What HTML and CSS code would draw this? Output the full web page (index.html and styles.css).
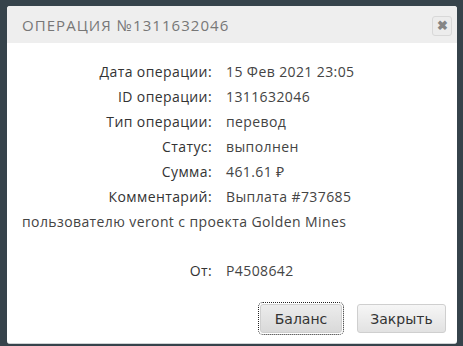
FILE: index.html
```html
<!DOCTYPE html>
<html lang="ru">
<head>
    <meta charset="UTF-8">
    <title>Операция</title>
    <link rel="stylesheet" href="styles.css">
</head>
<body>
    <div class="modal">
        <div class="modal-header">
            <span class="modal-title">Операция №1311632046</span>
            <button class="btn-close">&#10006;</button>
        </div>
        <div class="modal-body">
            <div class="info">
                <div class="label">Дата операции:</div>
                <div class="value">15 Фев 2021 23:05</div>
                <div class="label">ID операции:</div>
                <div class="value">1311632046</div>
                <div class="label">Тип операции:</div>
                <div class="value">перевод</div>
                <div class="label">Статус:</div>
                <div class="value">выполнен</div>
                <div class="label">Сумма:</div>
                <div class="value">461.61 &#8381;</div>
                <div class="label">Комментарий:</div>
                <div class="value">Выплата #737685</div>
                <div class="comment">пользователю veront с проекта Golden Mines</div>
                <div class="spacer"></div>
                <div class="label">От:</div>
                <div class="value">P4508642</div>
            </div>
        </div>
        <div class="modal-footer">
            <button class="btn btn-focus">Баланс</button>
            <button class="btn btn-close-modal">Закрыть</button>
        </div>
    </div>
</body>
</html>
```

FILE: styles.css
```css
* {
    margin: 0;
    padding: 0;
    box-sizing: border-box;
}

body {
    background: #36434b;
    font-family: "Open Sans", "Liberation Sans", sans-serif;
    padding: 6px 6px 0 7px;
}

.modal {
    width: 450px;
    height: 338px;
    background: #fff;
    border-radius: 3px;
    border-bottom: 1px solid #cfd2d4;
    overflow: hidden;
}

.modal-header {
    height: 37px;
    background: #eeeeee;
    display: flex;
    align-items: center;
    justify-content: space-between;
    padding: 0 5px 0 15px;
}

.modal-title {
    font-size: 15px;
    text-transform: uppercase;
    letter-spacing: 1.05px;
    color: #777;
}

.btn-close {
    width: 20px;
    height: 20px;
    border: 1px solid #d8d8d8;
    border-radius: 3px;
    background: #ececec;
    color: #858585;
    font-size: 13px;
    font-weight: bold;
    line-height: 18px;
    margin-top: 3px;
}

.modal-body {
    padding: 16px 15px 0 15px;
}

.info {
    display: grid;
    grid-template-columns: 190px 1fr;
    column-gap: 14px;
    font-size: 14px;
    letter-spacing: 0.4px;
    line-height: 25px;
    color: #333;
}

.label {
    text-align: right;
}

.value {
    color: #444;
}

.comment {
    grid-column: 1 / 3;
    color: #444;
}

.spacer {
    grid-column: 1 / 3;
    height: 24px;
}

.modal-footer {
    display: flex;
    justify-content: flex-end;
    gap: 15px;
    padding: 21px 11px 0 0;
}

.btn {
    height: 29px;
    border: 1px solid #cfcfcf;
    border-radius: 3px;
    background: linear-gradient(#f6f6f6, #e2e2e2);
    font-family: "DejaVu Sans", sans-serif;
    font-size: 14px;
    color: #333;
}

.btn-focus {
    width: 82px;
    background: linear-gradient(#ececec, #d9d9d9);
    outline: 1px dotted #222;
    outline-offset: 1px;
}

.btn-close-modal {
    width: 89px;
}
```
